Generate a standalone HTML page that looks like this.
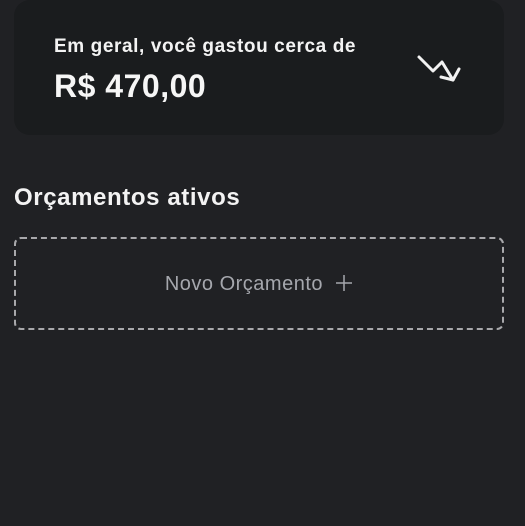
<!DOCTYPE html>
<html><head><meta charset="utf-8"><style>
html,body{margin:0;padding:0;background:#202124;width:525px;height:526px;overflow:hidden;font-family:"Liberation Sans",sans-serif}
.card{position:absolute;left:14px;top:0;width:490px;height:135px;background:#1a1c1e;border-radius:16px}
.l1{position:absolute;left:54px;top:36px;color:#f3f3f3;font-size:19px;font-weight:bold;letter-spacing:0.6px;white-space:nowrap}
.l2{position:absolute;left:54px;top:68px;color:#f6f6f6;font-size:32px;font-weight:bold;letter-spacing:0.5px}
svg{position:absolute;left:0;top:0}
h2{position:absolute;left:14px;top:184px;margin:0;color:#f3f3f3;font-size:24px;font-weight:bold;letter-spacing:0.6px}
.box{position:absolute;left:14px;top:237px;width:486px;height:89px;border:2px dashed #a8a8ab;border-radius:7px}
.nb{position:absolute;left:0;right:0;top:34px;text-align:center;color:#a5a7ad;font-size:20px;letter-spacing:0.5px;white-space:nowrap}
</style></head><body>
<div class="card"></div>
<div class="l1">Em geral, você gastou cerca de</div>
<div class="l2">R$ 470,00</div>
<svg width="525" height="140"><g fill="none" stroke="#f2f2f2" stroke-width="3" stroke-linecap="round" stroke-linejoin="round"><path d="M419 57 L433 71 L442 62 L453 80"/><path d="M459 69 L453 80 L441 77"/></g></svg>
<h2>Orçamentos ativos</h2>
<div class="box"><div class="nb">Novo Orçamento &nbsp;<svg width="18" height="18" viewBox="0 0 18 18" style="position:static;vertical-align:-2px"><path d="M9 1V17M1 9H17" stroke="#a5a7ad" stroke-width="1.5"/></svg></div></div>
</body></html>
